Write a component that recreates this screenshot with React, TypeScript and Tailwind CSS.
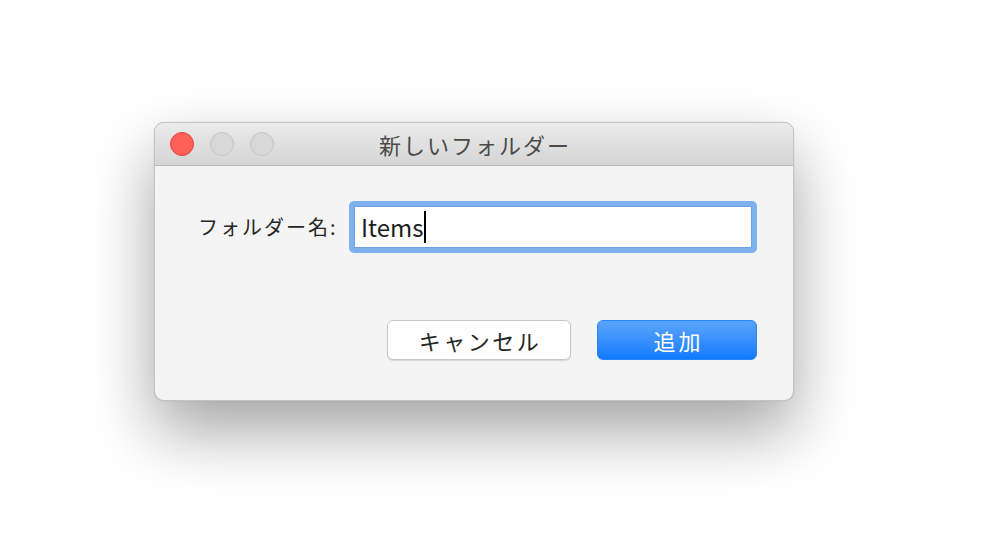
const font = "font-['Noto_Sans_CJK_JP','Noto_Sans',sans-serif]";

const TrafficLight = ({ color }: { color: "red" | "gray" }) => (
  <span
    className={
      color === "red"
        ? "block w-[24px] h-[24px] rounded-full bg-[#fe5f57] border border-[#e2463f]"
        : "block w-[24px] h-[24px] rounded-full bg-[#d8d8d8] border border-[#c3c3c3]"
    }
  />
);

export default function App() {
  return (
    <div className={`w-[1000px] h-[560px] bg-white pl-[154px] pt-[122px] ${font}`}>
      {/* Dialog window */}
      <div className="w-[640px] h-[279px] rounded-[10px] border border-[#c4c4c4] bg-[#f4f4f4] overflow-hidden flex flex-col shadow-[0_30px_65px_rgba(0,0,0,0.36),0_0_1px_rgba(0,0,0,0.3)]">
        {/* Title bar */}
        <div className="relative h-[43px] shrink-0 bg-gradient-to-b from-[#ebebeb] to-[#d5d5d5] border-b border-[#b9b9b9] flex items-center pl-[15px] gap-[16px]">
          <TrafficLight color="red" />
          <TrafficLight color="gray" />
          <TrafficLight color="gray" />
          <span className="absolute inset-0 flex items-center justify-center pl-[2px] text-[22px] text-[#4a4a4a] tracking-[2px] pointer-events-none">
            新しいフォルダー
          </span>
        </div>

        {/* Body */}
        <div className="flex-1 flex flex-col pl-[43px] pr-[36px]">
          <div className="flex items-center mt-[35px]">
            <label className="w-[139px] mr-[12px] whitespace-nowrap text-[20px] tracking-[2px] text-[#262626] leading-none">
              フォルダー名:
            </label>
            <div className="w-[408px] h-[52px] rounded-[5px] bg-[#7fb1ef] p-[5px]">
              <div className="w-full h-full bg-white border border-[#6ea2e6] flex items-center pl-[6px]">
                <span className="text-[24px] text-[#1e1e1e] leading-none">Items</span>
                <span className="w-[2px] h-[32px] bg-black ml-[1px]" />
              </div>
            </div>
          </div>

          <div className="flex justify-end gap-[26px] mt-[67px]">
            <button className="w-[184px] h-[40px] rounded-[6px] bg-white border border-[#c8c8c8] shadow-[0_1px_1px_rgba(0,0,0,0.12)] text-[22px] tracking-[2.5px] pl-[2px] text-[#262626] leading-none">
              キャンセル
            </button>
            <button className="w-[160px] h-[40px] rounded-[6px] bg-gradient-to-b from-[#5aa5fb] to-[#0a7aff] border border-[#2b86f5] text-[22px] tracking-[3px] pl-[3px] text-white leading-none">
              追加
            </button>
          </div>
        </div>
      </div>
    </div>
  );
}
